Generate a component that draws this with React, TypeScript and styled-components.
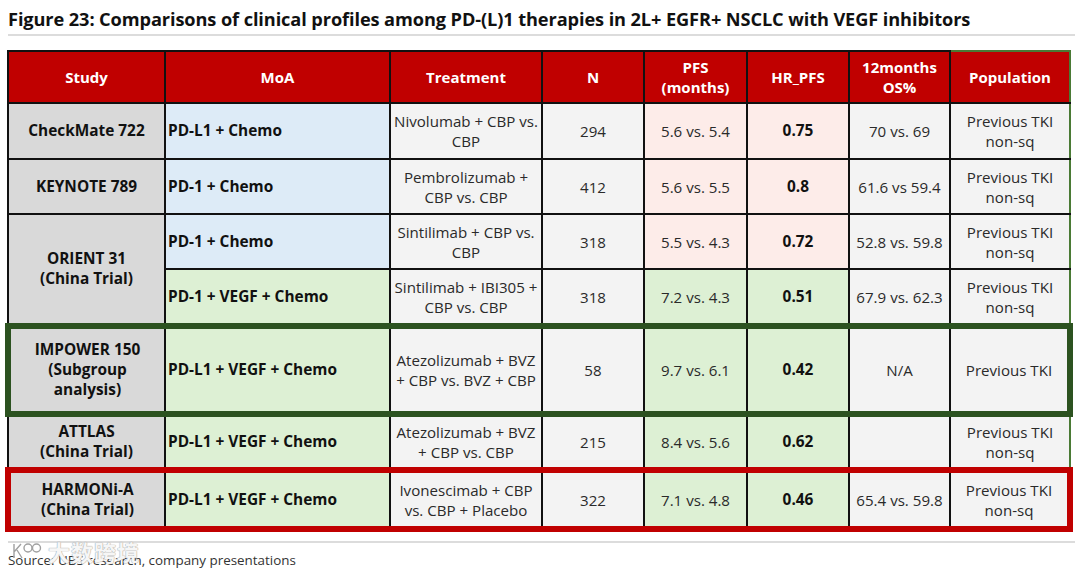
import React from 'react';
import styled, { createGlobalStyle, css } from 'styled-components';

const GlobalStyle = createGlobalStyle`
  html, body {
    margin: 0;
    padding: 0;
    background: #ffffff;
  }
  body {
    font-family: "Open Sans", "Noto Sans", "Liberation Sans", sans-serif;
    color: #1a1a1a;
  }
`;

const COLORS = {
  header: '#C00000',
  study: '#D9D9D9',
  blue: '#DDEBF7',
  green: '#DDF0D4',
  pink: '#FDECE9',
  plain: '#F3F3F3',
  boxGreen: '#2C5220',
  boxRed: '#C00000',
  edgeGreen: '#4A7A35',
};

type Tone = 'study' | 'blue' | 'green' | 'pink' | 'plain';
type Box = 'green' | 'red' | undefined;

// Page
const Page = styled.div`
  width: 1080px;
  height: 573px;
  padding: 8px 8px 0 8px;
  box-sizing: border-box;
  position: relative;
`;

const Title = styled.h1`
  margin: 0;
  font-size: 18.2px;
  font-weight: 700;
  letter-spacing: -0.1px;
  line-height: 22px;
  color: #111;
  padding-bottom: 4px;
  border-bottom: 2px solid #dcdcdc;
  width: 1067px;
  white-space: nowrap;
`;

const TableWrap = styled.div`
  margin-top: 14px;
  margin-left: -3px;
`;

const Table = styled.table`
  border-collapse: collapse;
  table-layout: fixed;
  width: 1062px;
`;

const HeadCell = styled.th<{ $last?: boolean }>`
  background: ${COLORS.header};
  color: #ffffff;
  font-size: 15px;
  font-weight: 700;
  line-height: 20px;
  text-align: center;
  vertical-align: middle;
  height: 50px;
  padding: 0 4px;
  border: 2px solid #111;
  ${({ $last }) =>
    $last &&
    css`
      border-top-color: ${COLORS.edgeGreen};
      border-right-color: ${COLORS.edgeGreen};
    `}
`;

const Row = styled.tr<{ $h: number }>`
  height: ${({ $h }) => $h}px;
`;

const Cell = styled.td<{
  $tone: Tone;
  $bold?: boolean;
  $left?: boolean;
  $box?: Box;
  $first?: boolean;
  $last?: boolean;
}>`
  background: ${({ $tone }) => COLORS[$tone]};
  font-size: ${({ $bold }) => ($bold ? '15.4px' : '15.1px')};
  line-height: 20px;
  font-weight: ${({ $bold }) => ($bold ? 700 : 400)};
  color: ${({ $bold }) => ($bold ? '#111' : '#2a2a2a')};
  text-align: ${({ $left }) => ($left ? 'left' : 'center')};
  vertical-align: middle;
  padding: 0 2px;
  border: 2px solid #111;
  white-space: nowrap;
  ${({ $last }) =>
    $last &&
    css`
      border-right-color: ${COLORS.edgeGreen};
    `}
  ${({ $box }) =>
    $box &&
    css`
      border-top: 6px solid ${$box === 'green' ? COLORS.boxGreen : COLORS.boxRed};
      border-bottom: 6px solid ${$box === 'green' ? COLORS.boxGreen : COLORS.boxRed};
    `}
  ${({ $box, $first }) =>
    $box &&
    $first &&
    css`
      border-left: 6px solid ${$box === 'green' ? COLORS.boxGreen : COLORS.boxRed};
    `}
  ${({ $box, $last }) =>
    $box &&
    $last &&
    css`
      border-right: 6px solid ${$box === 'green' ? COLORS.boxGreen : COLORS.boxRed};
    `}
`;

const Footer = styled.div`
  margin-top: 9px;
  width: 1067px;
  border-top: 2px solid #dcdcdc;
  position: relative;
`;

const Source = styled.div`
  font-size: 13.4px;
  color: #333;
  line-height: 18px;
  padding-top: 8px;
`;

const Watermark = styled.div`
  position: absolute;
  left: 4px;
  top: -4px;
  display: flex;
  align-items: center;
  gap: 6px;
  font-family: "Noto Sans CJK SC", sans-serif;
  font-size: 22px;
  font-weight: 700;
  color: rgba(255, 255, 255, 0.92);
  text-shadow: 0 0 1px #a0a0a0, 0 0 1px #a0a0a0;
  letter-spacing: 1px;
  line-height: 24px;
`;

const cols = [157, 225, 152, 102, 103, 102, 101, 120];

const lines = (s: string) =>
  s.split('\n').map((l, i, a) => (
    <React.Fragment key={i}>
      {l}
      {i < a.length - 1 && <br />}
    </React.Fragment>
  ));

type Data = {
  study?: string;
  span?: number;
  moa: string;
  moaTone: Tone;
  treat: string;
  n: string;
  pfs: string;
  hr: string;
  tone: Tone;
  os: string;
  pop: string;
  h: number;
  box?: Box;
};

const rows: Data[] = [
  { study: 'CheckMate 722', moa: 'PD-L1 + Chemo', moaTone: 'blue', treat: 'Nivolumab + CBP vs.\nCBP', n: '294', pfs: '5.6 vs. 5.4', hr: '0.75', tone: 'pink', os: '70 vs. 69', pop: 'Previous TKI\nnon-sq', h: 56 },
  { study: 'KEYNOTE 789', moa: 'PD-1 + Chemo', moaTone: 'blue', treat: 'Pembrolizumab +\nCBP vs. CBP', n: '412', pfs: '5.6 vs. 5.5', hr: '0.8', tone: 'pink', os: '61.6 vs 59.4', pop: 'Previous TKI\nnon-sq', h: 55 },
  { study: 'ORIENT 31\n(China Trial)', span: 2, moa: 'PD-1 + Chemo', moaTone: 'blue', treat: 'Sintilimab + CBP vs.\nCBP', n: '318', pfs: '5.5 vs. 4.3', hr: '0.72', tone: 'pink', os: '52.8 vs. 59.8', pop: 'Previous TKI\nnon-sq', h: 55 },
  { moa: 'PD-1 + VEGF + Chemo', moaTone: 'green', treat: 'Sintilimab + IBI305 +\nCBP vs. CBP', n: '318', pfs: '7.2 vs. 4.3', hr: '0.51', tone: 'green', os: '67.9 vs. 62.3', pop: 'Previous TKI\nnon-sq', h: 57 },
  { study: 'IMPOWER 150\n(Subgroup\nanalysis)', moa: 'PD-L1 + VEGF + Chemo', moaTone: 'green', treat: 'Atezolizumab + BVZ\n+ CBP vs. BVZ + CBP', n: '58', pfs: '9.7 vs. 6.1', hr: '0.42', tone: 'green', os: 'N/A', pop: 'Previous TKI', h: 88, box: 'green' },
  { study: 'ATTLAS\n(China Trial)', moa: 'PD-L1 + VEGF + Chemo', moaTone: 'green', treat: 'Atezolizumab + BVZ\n+ CBP vs. CBP', n: '215', pfs: '8.4 vs. 5.6', hr: '0.62', tone: 'green', os: '', pop: 'Previous TKI\nnon-sq', h: 56 },
  { study: 'HARMONi-A\n(China Trial)', moa: 'PD-L1 + VEGF + Chemo', moaTone: 'green', treat: 'Ivonescimab + CBP\nvs. CBP + Placebo', n: '322', pfs: '7.1 vs. 4.8', hr: '0.46', tone: 'green', os: '65.4 vs. 59.8', pop: 'Previous TKI\nnon-sq', h: 59, box: 'red' },
];

export default function App() {
  return (
    <Page>
      <GlobalStyle />
      <Title>
        Figure 23: Comparisons of clinical profiles among PD-(L)1 therapies in 2L+ EGFR+ NSCLC with VEGF inhibitors
      </Title>
      <TableWrap>
        <Table>
          <colgroup>
            {cols.map((w, i) => (
              <col key={i} style={{ width: w }} />
            ))}
          </colgroup>
          <thead>
            <tr>
              <HeadCell>Study</HeadCell>
              <HeadCell>MoA</HeadCell>
              <HeadCell>Treatment</HeadCell>
              <HeadCell>N</HeadCell>
              <HeadCell>PFS<br />(months)</HeadCell>
              <HeadCell>HR_PFS</HeadCell>
              <HeadCell>12months<br />OS%</HeadCell>
              <HeadCell $last>Population</HeadCell>
            </tr>
          </thead>
          <tbody>
            {rows.map((r, i) => (
              <Row key={i} $h={r.h}>
                {r.study !== undefined && (
                  <Cell $tone="study" $bold rowSpan={r.span} $box={r.box} $first>
                    {lines(r.study)}
                  </Cell>
                )}
                <Cell $tone={r.moaTone} $bold $left $box={r.box}>{r.moa}</Cell>
                <Cell $tone="plain" $box={r.box}>{lines(r.treat)}</Cell>
                <Cell $tone="plain" $box={r.box}>{r.n}</Cell>
                <Cell $tone={r.tone} $box={r.box}>{r.pfs}</Cell>
                <Cell $tone={r.tone} $bold $box={r.box}>{r.hr}</Cell>
                <Cell $tone="plain" $box={r.box}>{r.os}</Cell>
                <Cell $tone="plain" $box={r.box} $last>{lines(r.pop)}</Cell>
              </Row>
            ))}
          </tbody>
        </Table>
      </TableWrap>
      <Footer>
        <Source>Source: UBS research, company presentations</Source>
        <Watermark>
          <svg width="30" height="20" viewBox="0 0 30 20">
            <g fill="none" stroke="#a0a0a0" strokeWidth="1.4">
              <path d="M2 3 L2 17 M2 11 L9 3 M5 9 L10 17" />
              <circle cx="16" cy="7" r="4" />
              <circle cx="24.5" cy="7" r="4" />
            </g>
          </svg>
          <span>大数跨境</span>
        </Watermark>
      </Footer>
    </Page>
  );
}
